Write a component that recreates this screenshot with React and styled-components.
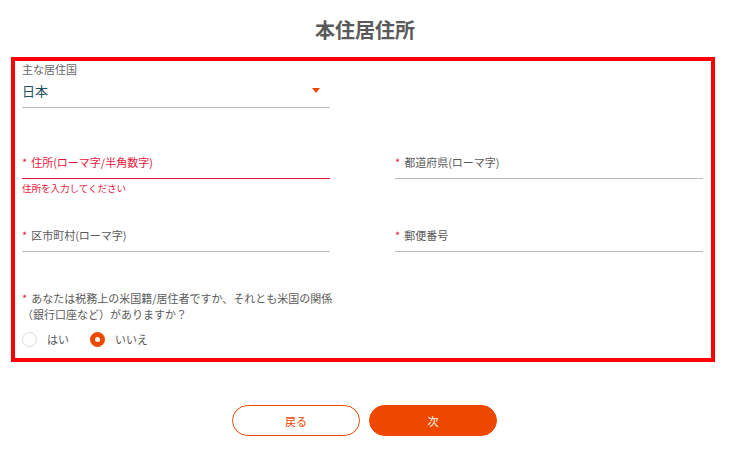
import React from 'react';
import styled, { createGlobalStyle } from 'styled-components';

const GlobalStyle = createGlobalStyle`
  body {
    margin: 0;
    background: #fff;
    font-family: "Noto Sans CJK JP", "Noto Sans", sans-serif;
    color: #555;
  }
`;

const Page = styled.div`
  width: 730px;
`;

const Title = styled.h1`
  margin: 0;
  padding-top: 18px;
  height: 39px;
  text-align: center;
  font-size: 20px;
  line-height: 24px;
  font-weight: 700;
  color: #595959;
`;

const Frame = styled.div`
  box-sizing: border-box;
  width: 704px;
  height: 305px;
  margin-left: 11px;
  border: 4px solid #ff0000;
  padding: 1px 8px 0 7px;
`;

const Grid = styled.div`
  display: grid;
  grid-template-columns: 308px 308px;
  column-gap: 65px;
  row-gap: 23px;
  margin-top: 38px;
`;

const SmallLabel = styled.div`
  font-size: 11px;
  line-height: 14px;
  color: #666;
`;

const SelectRow = styled.div`
  box-sizing: border-box;
  width: 308px;
  height: 32px;
  padding-bottom: 3px;
  display: flex;
  align-items: center;
  justify-content: space-between;
  border-bottom: 1px solid #bbb;
`;

const SelectValue = styled.span`
  font-size: 13px;
  color: #1d5261;
`;

const Caret = styled.span`
  width: 0;
  height: 0;
  margin-right: 10px;
  border-left: 4px solid transparent;
  border-right: 4px solid transparent;
  border-top: 5px solid #ee4800;
`;

const Field = styled.div`
  height: 32px;
  display: flex;
  align-items: center;
  border-bottom: 1px solid ${p => (p.$error ? '#e8173d' : '#bbb')};
  font-size: 11px;
  color: ${p => (p.$error ? '#e8173d' : '#5a5a5a')};
`;

const Star = styled.span`
  color: #e8173d;
  margin-right: 4px;
`;

const ErrorSlot = styled.div`
  height: 17px;
  padding-top: 2px;
  box-sizing: border-box;
  font-size: 9.5px;
  line-height: 14px;
  color: #e8173d;
`;

const Question = styled.p`
  margin: 21px 0 0;
  font-size: 11px;
  line-height: 16px;
  color: #5a5a5a;
  white-space: nowrap;
`;

const Radios = styled.div`
  display: flex;
  align-items: center;
  gap: 21px;
  margin-top: 9px;
`;

const RadioOption = styled.label`
  display: flex;
  align-items: center;
  gap: 10px;
  font-size: 11px;
  color: #5a5a5a;
`;

const RadioDot = styled.span`
  box-sizing: border-box;
  width: 15px;
  height: 15px;
  border-radius: 50%;
  border: 1px solid ${p => (p.$on ? '#ee4800' : '#d9d9e3')};
  background: ${p => (p.$on ? '#ee4800' : '#fff')};
  display: flex;
  align-items: center;
  justify-content: center;
  &::after {
    content: '';
    display: ${p => (p.$on ? 'block' : 'none')};
    width: 5px;
    height: 5px;
    border-radius: 50%;
    background: #fff;
  }
`;

const Buttons = styled.div`
  display: flex;
  justify-content: center;
  gap: 9px;
  margin-top: 43px;
  padding-right: 1px;
`;

const Button = styled.button`
  box-sizing: border-box;
  width: 128px;
  height: 31px;
  border-radius: 16px;
  border: 1px solid #ee4800;
  background: ${p => (p.$primary ? '#ee4800' : '#fff')};
  color: ${p => (p.$primary ? '#fff' : '#ee4800')};
  font-family: "Noto Sans CJK JP", sans-serif;
  font-size: 11px;
  cursor: pointer;
`;

const fields = [
  { label: '住所(ローマ字/半角数字)', error: '住所を入力してください' },
  { label: '都道府県(ローマ字)' },
  { label: '区市町村(ローマ字)' },
  { label: '郵便番号' },
];

const App = () => {
  return (
    <Page>
      <GlobalStyle />
      <Title>本住居住所</Title>
      <Frame>
        <SmallLabel>主な居住国</SmallLabel>
        <SelectRow>
          <SelectValue>日本</SelectValue>
          <Caret />
        </SelectRow>
        <Grid>
          {fields.map(f => (
            <div key={f.label}>
              <Field $error={!!f.error}>
                <Star>*</Star>
                {f.label}
              </Field>
              <ErrorSlot>{f.error}</ErrorSlot>
            </div>
          ))}
        </Grid>
        <Question>
          <Star>*</Star>あなたは税務上の米国籍/居住者ですか、それとも米国の関係
          <br />
          （銀行口座など）がありますか？
        </Question>
        <Radios>
          <RadioOption>
            <RadioDot />
            はい
          </RadioOption>
          <RadioOption>
            <RadioDot $on />
            いいえ
          </RadioOption>
        </Radios>
      </Frame>
      <Buttons>
        <Button>戻る</Button>
        <Button $primary>次</Button>
      </Buttons>
    </Page>
  );
};

export default App;
